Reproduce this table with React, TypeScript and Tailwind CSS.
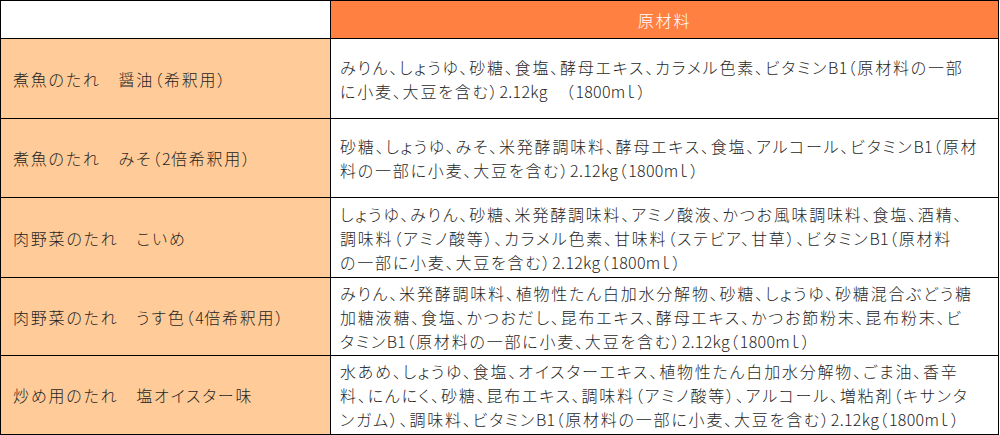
const rows: { name: string; lines: string[] }[] = [
  {
    name: "煮魚のたれ　醤油（希釈用）",
    lines: [
      "みりん、しょうゆ、砂糖、食塩、酵母エキス、カラメル色素、ビタミンB1（原材料の一部",
      "に小麦、大豆を含む）2.12kg　（1800mｌ）",
    ],
  },
  {
    name: "煮魚のたれ　みそ（2倍希釈用）",
    lines: [
      "砂糖、しょうゆ、みそ、米発酵調味料、酵母エキス、食塩、アルコール、ビタミンB1（原材",
      "料の一部に小麦、大豆を含む）2.12kg（1800mｌ）",
    ],
  },
  {
    name: "肉野菜のたれ　こいめ",
    lines: [
      "しょうゆ、みりん、砂糖、米発酵調味料、アミノ酸液、かつお風味調味料、食塩、酒精、",
      "調味料（アミノ酸等）、カラメル色素、甘味料（ステビア、甘草）、ビタミンB1（原材料",
      "の一部に小麦、大豆を含む）2.12kg（1800mｌ）",
    ],
  },
  {
    name: "肉野菜のたれ　うす色（4倍希釈用）",
    lines: [
      "みりん、米発酵調味料、植物性たん白加水分解物、砂糖、しょうゆ、砂糖混合ぶどう糖",
      "加糖液糖、食塩、かつおだし、昆布エキス、酵母エキス、かつお節粉末、昆布粉末、ビ",
      "タミンB1（原材料の一部に小麦、大豆を含む）2.12kg（1800mｌ）",
    ],
  },
  {
    name: "炒め用のたれ　塩オイスター味",
    lines: [
      "水あめ、しょうゆ、食塩、オイスターエキス、植物性たん白加水分解物、ごま油、香辛",
      "料、にんにく、砂糖、昆布エキス、調味料（アミノ酸等）、アルコール、増粘剤（キサンタ",
      "ンガム）、調味料、ビタミンB1（原材料の一部に小麦、大豆を含む）2.12kg（1800mｌ）",
    ],
  },
]

const heights = ["h-[80px]", "h-[79px]", "h-[80px]", "h-[78px]", "h-[79px]"]

// latin runs (B1, 2.12kg, 1800m) sit tighter than the kana around them
function Text({ s }: { s: string }) {
  return (
    <>
      {s.split(/([A-Za-z0-9.]+)/).map((part, i) =>
        i % 2 === 1 ? (
          <span key={i} className="tracking-[0.3px]">
            {part}
          </span>
        ) : (
          <span key={i}>{part}</span>
        ),
      )}
    </>
  )
}

export default function App() {
  return (
    <div
      className="w-[1000px] h-[435px] bg-white overflow-hidden"
      style={{ fontFamily: '"Noto Sans CJK JP", "Noto Sans", sans-serif' }}
    >
      <table className="w-[999px] border-collapse text-[16px] leading-[24px] font-light tracking-[1.8px] text-[#1f1f1f] [font-feature-settings:'palt']">
        <tbody>
          <tr className="h-[38px]">
            <td className="w-[330px] border border-black bg-white"></td>
            <td className="border border-black bg-[#ff8040] text-center text-white">原材料</td>
          </tr>
          {rows.map((r, i) => (
            <tr key={i} className={heights[i]}>
              <td className="border border-black bg-[#ffcc99] pl-3 align-middle whitespace-nowrap">
                <Text s={r.name} />
              </td>
              <td className="border border-black bg-white pl-[9px] align-middle">
                {r.lines.map((l, j) => (
                  <div key={j} className="whitespace-nowrap">
                    <Text s={l} />
                  </div>
                ))}
              </td>
            </tr>
          ))}
        </tbody>
      </table>
    </div>
  )
}
